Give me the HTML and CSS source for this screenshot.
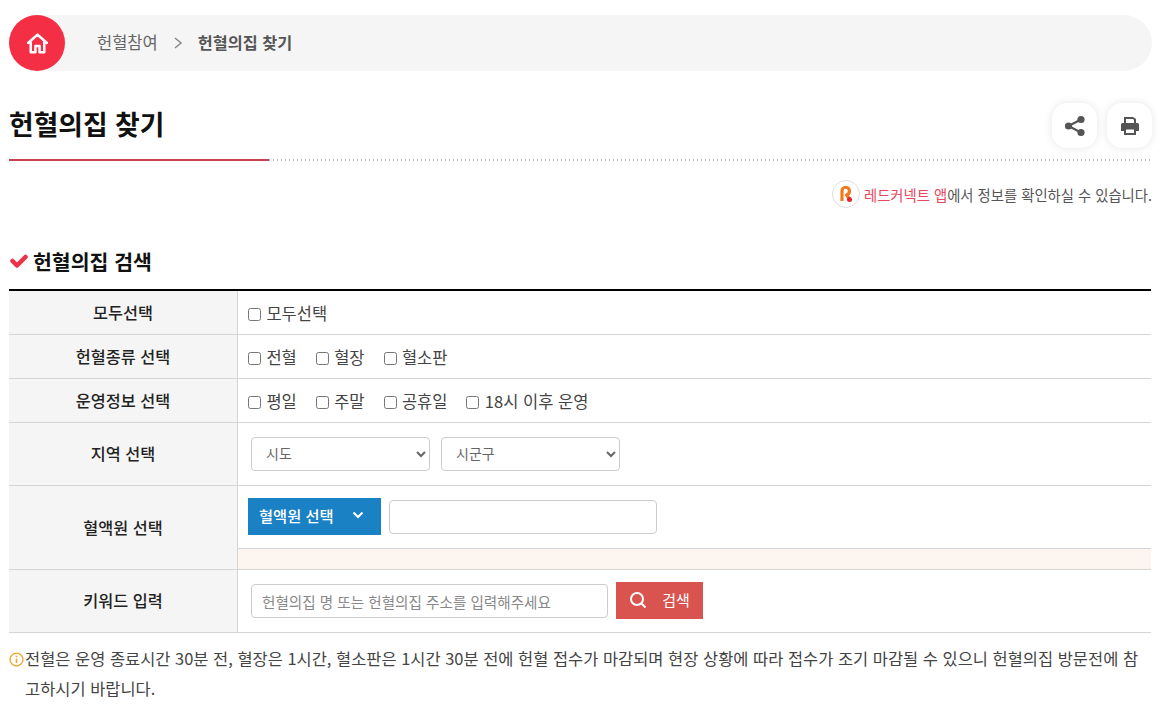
FILE: index.html
```html
<!DOCTYPE html>
<html lang="ko">
<head>
<meta charset="utf-8">
<title>헌혈의집 찾기</title>
<link rel="stylesheet" href="styles.css">
</head>
<body>
<div class="page">
  <nav class="crumb">
    <a class="home"><svg width="25" height="25" viewBox="0 0 24 24" fill="none" stroke="#fff" stroke-width="2.4" stroke-linejoin="round" stroke-linecap="round"><path d="M3 11.5 12 3.5l9 8M5.500 10v10.500h4.500v-6h4v6h4.500V10"/></svg></a>
    <span class="c1">헌혈참여</span>
    <svg class="sep" width="10" height="14" viewBox="0 0 10 14" fill="none" stroke="#888" stroke-width="1.5"><path d="M2 2l6 5-6 5"/></svg>
    <strong class="c2">헌혈의집 찾기</strong>
  </nav>

  <header class="head">
    <h1>헌혈의집 찾기</h1>
    <div class="tools">
      <button class="tool" type="button"><svg width="22" height="22" viewBox="0 0 22 22" fill="#555"><circle cx="17" cy="4.500" r="3.600"/><circle cx="4.500" cy="11" r="3.600"/><circle cx="17" cy="17.500" r="3.600"/><path d="M4.500 11 17 4.500M4.500 11 17 17.500" stroke="#555" stroke-width="2.200"/></svg></button>
      <button class="tool" type="button"><svg width="20" height="20" viewBox="0 0 20 20"><path fill="#555" d="M4 1h9l3 2v4H4zM2.500 7h15A1.500 1.500 0 0 1 19 8.500V15h-3v4H4v-4H1V8.500A1.500 1.500 0 0 1 2.500 7z"/><path fill="#fff" d="M6 3h7l1 1v3H6zM6 13.500h8V17H6z"/></svg></button>
    </div>
  </header>

  <p class="app">
    <span class="applogo"><svg width="16" height="18" viewBox="0 0 16 18" fill="none"><path d="M4 16V6a3.500 3.500 0 0 1 7.500 0c0 2.500-1.500 3.500-3 4l3 4" stroke="#f47a1f" stroke-width="3.200" stroke-linejoin="round"/><circle cx="11.500" cy="14.500" r="2.500" fill="#e8262d"/></svg></span>
    <span><span class="red">레드커넥트 앱</span>에서 정보를 확인하실 수 있습니다.</span>
  </p>

  <h2 class="sub"><svg width="18" height="14" viewBox="0 0 18 14" fill="none" stroke="#ee3048" stroke-width="4.500" stroke-linecap="round" stroke-linejoin="round"><path d="M2.500 7l4.500 4.500L15.500 3"/></svg>헌혈의집 검색</h2>

  <div class="form">
    <div class="row r1">
      <div class="th">모두선택</div>
      <div class="td"><label class="ck"><input type="checkbox">모두선택</label></div>
    </div>
    <div class="row r1">
      <div class="th">헌혈종류 선택</div>
      <div class="td">
        <label class="ck"><input type="checkbox">전혈</label>
        <label class="ck"><input type="checkbox">혈장</label>
        <label class="ck"><input type="checkbox">혈소판</label>
      </div>
    </div>
    <div class="row r1">
      <div class="th">운영정보 선택</div>
      <div class="td">
        <label class="ck"><input type="checkbox">평일</label>
        <label class="ck"><input type="checkbox">주말</label>
        <label class="ck"><input type="checkbox">공휴일</label>
        <label class="ck"><input type="checkbox">18시 이후 운영</label>
      </div>
    </div>
    <div class="row r2">
      <div class="th">지역 선택</div>
      <div class="td sel">
        <select><option>시도</option></select>
        <select><option>시군구</option></select>
      </div>
    </div>
    <div class="row r3">
      <div class="th">혈액원 선택</div>
      <div class="stack">
        <div class="td blood">
          <button class="bbtn" type="button">혈액원 선택<svg width="12" height="8" viewBox="0 0 12 8" fill="none" stroke="#fff" stroke-width="2"><path d="M1.500 1.500 6 6l4.500-4.500"/></svg></button>
          <input class="binput" type="text">
        </div>
        <div class="cream"></div>
      </div>
    </div>
    <div class="row r2">
      <div class="th">키워드 입력</div>
      <div class="td sel">
        <input class="kw" type="text" placeholder="헌혈의집 명 또는 헌혈의집 주소를 입력해주세요">
        <button class="sbtn" type="button"><svg width="18" height="18" viewBox="0 0 18 18" fill="none" stroke="#fff" stroke-width="2"><circle cx="8" cy="8" r="6"/><path d="M12.500 12.500 16.500 16.500"/></svg>검색</button>
      </div>
    </div>
  </div>

  <p class="note"><svg class="info" width="15" height="15" viewBox="0 0 14 14" fill="none"><circle cx="7" cy="7" r="6" stroke="#f0a830" stroke-width="1.300"/><path d="M7 6v4.300M7 3.400v1.400" stroke="#f0a830" stroke-width="1.500"/></svg>전혈은 운영 종료시간 30분 전, 혈장은 1시간, 혈소판은 1시간 30분 전에 헌혈 접수가 마감되며 현장 상황에 따라 접수가 조기 마감될 수 있으니 헌혈의집 방문전에 참고하시기 바랍니다.</p>
</div>
</body>
</html>
```
FILE: styles.css
```css
* { box-sizing: border-box; }
html, body { margin: 0; padding: 0; background: #fff; }
body { font-family: "Noto Sans CJK KR", "Noto Sans", sans-serif; font-size: 16.5px; color: #333; overflow: hidden; }
.page { width: 1143px; margin: 15px 0 0 9px; }

.crumb { height: 56px; background: #f5f5f5; border-radius: 28px; display: flex; align-items: center; color: #666; }
.home { width: 56px; height: 56px; border-radius: 50%; background: #f42f45; display: flex; align-items: center; justify-content: center; margin-right: 32px; }
.c1 { font-size: 16.500px; margin-top: -2px; }
.sep { margin: 0 15px 0 15px; }
.c2 { font-size: 16.300px; font-weight: 700; color: #555; margin-top: -2px; }

.head { display: flex; justify-content: space-between; align-items: flex-start; height: 74px; margin-top: 15px; position: relative; }
.head::after { content: ""; position: absolute; left: 0; right: 0; bottom: -1px; height: 2px; background: linear-gradient(90deg, #c8414e 260px, transparent 260px), repeating-linear-gradient(90deg, #bbb 0 1px, transparent 1px 4px); }
h1 { margin: 18px 0 0; font-size: 26.800px; line-height: 40px; font-weight: 700; color: #111; }
.tools { display: flex; gap: 10px; margin: 17px 0 0; }
.tool { width: 45px; height: 45px; border: 0; padding: 0; border-radius: 15px; background: #fff; box-shadow: 0 0 8px rgba(0,0,0,.1); display: flex; align-items: center; justify-content: center; }

.app { margin: 20px 0 0; height: 28px; display: flex; justify-content: flex-end; align-items: center; gap: 4px; font-size: 14.350px; color: #555; }
.applogo { width: 28px; height: 28px; border: 1px solid #ddd; border-radius: 50%; display: flex; align-items: center; justify-content: center; }
.red { color: #e8485c; }

.sub { margin: 38px 0 0; height: 30px; display: flex; align-items: center; gap: 5px; font-size: 20.500px; font-weight: 700; color: #111; padding-left: 1px; }

.form { margin-top: 13px; border-top: 2px solid #000; width: 1142px; }
.row { display: flex; border-bottom: 1px solid #d5d5d5; }
.r1 { height: 44px; }
.r2 { height: 63px; }
.r3 { height: 84px; }
.th { width: 229px; flex: none; background: #f5f5f5; border-right: 1px solid #d5d5d5; display: flex; align-items: center; justify-content: center; font-size: 16.300px; font-weight: 500; color: #222; padding-bottom: 2px; }
.td { flex: 1; display: flex; align-items: center; padding-left: 10px; color: #444; font-size: 16.500px; }
.ck { display: flex; align-items: center; margin-right: 19px; }
.ck input { width: 13px; height: 13px; margin: 3px 5.400px 0 0; }
.sel { gap: 11px; padding-left: 13px; }
select { width: 179px; height: 34px; border: 1px solid #ccc; border-radius: 4px; background-color: #fff; padding: 0 10px 2px; font-family: inherit; font-size: 14px; color: #666; }
.stack { flex: 1; display: flex; flex-direction: column; }
.blood { flex: none; height: 62px; gap: 8px; padding-bottom: 1px; }
.bbtn { width: 133px; height: 37px; border: 0; background: #1a81c4; color: #fff; font-family: inherit; font-size: 15.300px; font-weight: 500; display: flex; align-items: center; gap: 18px; padding: 0 0 3px 11px; }
.binput { width: 268px; height: 34px; border: 1px solid #ccc; border-radius: 4px; background: #fff; }
.cream { flex: 1; background: #fdf6f0; border-top: 1px solid #d5d5d5; }
.kw { width: 357px; height: 34px; border: 1px solid #ccc; border-radius: 4px; padding: 0 10px; font-family: inherit; font-size: 14.600px; }
.kw::placeholder { color: #888; }
.sbtn { width: 87px; height: 37px; margin: -2px 0 0 -3px; border: 0; background: #d9534f; color: #fff; font-family: inherit; font-size: 15px; display: flex; align-items: center; justify-content: center; gap: 15px; padding-bottom: 2px; }

.note { margin: 10px 0 0; padding-left: 16px; text-indent: -16px; font-size: 16.470px; line-height: 30px; color: #444; }
.info { margin-right: 1px; vertical-align: -2px; }
```
